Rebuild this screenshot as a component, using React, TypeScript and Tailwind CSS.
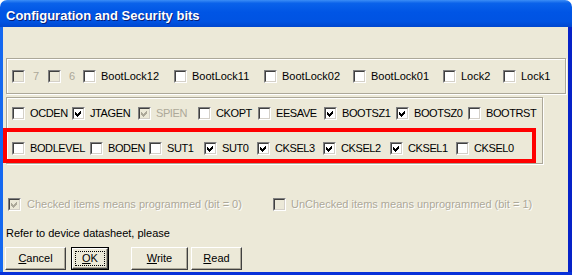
import React from 'react';

type Bit = { label: string; w?: number; checked?: boolean; disabled?: boolean };

const lockBits: Bit[] = [
  { label: '7', w: 36, disabled: true },
  { label: '6', w: 35, disabled: true },
  { label: 'BootLock12', w: 91 },
  { label: 'BootLock11', w: 90 },
  { label: 'BootLock02', w: 89 },
  { label: 'BootLock01', w: 90 },
  { label: 'Lock2', w: 60 },
  { label: 'Lock1' },
];

const highBits: Bit[] = [
  { label: 'OCDEN', w: 60 },
  { label: 'JTAGEN', w: 66, checked: true },
  { label: 'SPIEN', w: 60, checked: true, disabled: true },
  { label: 'CKOPT', w: 60 },
  { label: 'EESAVE', w: 66 },
  { label: 'BOOTSZ1', w: 72, checked: true },
  { label: 'BOOTSZ0', w: 72, checked: true },
  { label: 'BOOTRST' },
];

const lowBits: Bit[] = [
  { label: 'BODLEVEL', w: 78 },
  { label: 'BODEN', w: 59 },
  { label: 'SUT1', w: 55 },
  { label: 'SUT0', w: 53, checked: true },
  { label: 'CKSEL3', w: 66, checked: true },
  { label: 'CKSEL2', w: 67, checked: true },
  { label: 'CKSEL1', w: 66, checked: true },
  { label: 'CKSEL0' },
];

// classic sunken 13x13 checkbox
const CheckBox = ({ checked, disabled }: { checked?: boolean; disabled?: boolean }) => (
  <span className="block w-[13px] h-[13px] shrink-0 border border-t-[#808080] border-l-[#808080] border-b-white border-r-white">
    <span
      className={`block w-full h-full border border-t-[#404040] border-l-[#404040] border-b-[#d4d0c8] border-r-[#d4d0c8] ${
        disabled ? 'bg-[#ece9d8]' : 'bg-white'
      }`}
    >
      {checked && (
        <svg width="9" height="9" viewBox="0 0 9 9" className="block" shapeRendering="crispEdges">
          <path
            d="M1 3h1v1h1v1h1v-1h1v-1h1v-1h1v3h-1v1h-1v1h-1v1h-1v-1h-1v-1h-1z"
            fill={disabled ? '#aca899' : '#000'}
          />
        </svg>
      )}
    </span>
  </span>
);

const BitItem = ({ bit, caps }: { bit: Bit; caps?: boolean }) => (
  <div className="flex items-center h-[13px] shrink-0" style={bit.w ? { width: bit.w } : undefined}>
    <CheckBox checked={bit.checked} disabled={bit.disabled} />
    <span
      className={`ml-[5px] leading-[13px] whitespace-nowrap ${caps ? 'tracking-[-0.4px]' : ''} ${
        bit.disabled ? 'text-[#aca899]' : 'text-black'
      } ${bit.label.length === 1 ? 'pl-[3px]' : ''}`}
    >
      {bit.label}
    </span>
  </div>
);

const Button = ({
  label,
  hot,
  w,
  isDefault,
}: {
  label: string;
  hot: number;
  w: number;
  isDefault?: boolean;
}) => {
  const text = (
    <span>
      {label.slice(0, hot)}
      <span className="underline underline-offset-[1px]">{label[hot]}</span>
      {label.slice(hot + 1)}
    </span>
  );
  return (
    <div
      className={`h-[23px] shrink-0 ${isDefault ? 'border border-black' : ''}`}
      style={{ width: w }}
    >
      <div className="h-full w-full border border-t-white border-l-white border-r-[#404040] border-b-[#404040] shadow-[inset_-1px_-1px_0_#aca899] bg-[#ece9d8] flex items-center justify-center p-[2px]">
        {isDefault ? (
          <span className="flex-1 self-stretch border border-dotted border-black flex items-center justify-center">
            {text}
          </span>
        ) : (
          text
        )}
      </div>
    </div>
  );
};

export default function App() {
  return (
    <div className="w-[572px] h-[275px] bg-white flex flex-col font-['Liberation_Sans',Arial,sans-serif] text-[11px] text-black overflow-hidden">
      {/* Title bar */}
      <div className="h-[27px] shrink-0 rounded-t-[7px] bg-[linear-gradient(to_bottom,#3b8df6_0%,#0a62ea_12%,#0055e5_45%,#0053e2_80%,#0047cf_100%)] flex items-center pl-[6px] pt-[4px]">
        <span className="text-white font-bold text-[13px] leading-[15px] [text-shadow:1px_1px_0_#0a1e75]">
          Configuration and Security bits
        </span>
      </div>

      <div className="flex flex-1 min-h-0">
        <div className="w-[3px] bg-[#1468f0]" />

        {/* Dialog body */}
        <div className="flex-1 bg-[#ece9d8] flex flex-col">
          {/* Lock bits */}
          <div className="mt-[31px] ml-[3px] w-[560px] h-[36px] border border-[#aca899] shadow-[inset_1px_1px_0_#fff,1px_1px_0_#fff] flex items-center pl-[5px]">
            {lockBits.map((b) => (
              <BitItem key={b.label} bit={b} />
            ))}
          </div>

          {/* Fuse bits */}
          <div className="relative mt-[3px] ml-[3px] w-[537px] h-[67px] border border-[#aca899] shadow-[inset_1px_1px_0_#fff,1px_1px_0_#fff] flex flex-col pl-[5px] pt-[9px]">
            <div className="flex">
              {highBits.map((b) => (
                <BitItem key={b.label} bit={b} caps />
              ))}
            </div>
            <div className="flex mt-[22px]">
              {lowBits.map((b) => (
                <BitItem key={b.label} bit={b} caps />
              ))}
            </div>
            {/* highlight annotation */}
            <div className="absolute left-[-4px] top-[30px] w-[533px] h-[35px] border-4 border-[#ff0000]" />
          </div>

          {/* Legend */}
          <div className="mt-[34px] h-[13px] flex items-center">
            <div className="ml-[5px] w-[265px] flex items-center">
              <CheckBox checked disabled />
              <span className="ml-[6px] text-[#aca899] [text-shadow:1px_1px_0_#fff] whitespace-nowrap">
                Checked items means programmed (bit = 0)
              </span>
            </div>
            <div className="ml-[-0px] flex items-center">
              <CheckBox disabled />
              <span className="ml-[5px] text-[#aca899] [text-shadow:1px_1px_0_#fff] whitespace-nowrap">
                UnChecked items means unprogrammed (bit = 1)
              </span>
            </div>
          </div>

          <div className="mt-[16px] ml-[3px] h-[13px] leading-[13px]">Refer to device datasheet, please</div>

          {/* Buttons */}
          <div className="mt-[7px] ml-[2px] flex">
            <Button label="Cancel" hot={0} w={61} />
            <div className="ml-[5px]">
              <Button label="OK" hot={0} w={38} isDefault />
            </div>
            <div className="ml-[22px]">
              <Button label="Write" hot={0} w={57} />
            </div>
            <div className="ml-[3px]">
              <Button label="Read" hot={0} w={51} />
            </div>
          </div>
        </div>

        <div className="w-[4px] bg-[#0622c8]" />
      </div>
      <div className="h-[3px] shrink-0 bg-[#0831d9]" />
    </div>
  );
}
